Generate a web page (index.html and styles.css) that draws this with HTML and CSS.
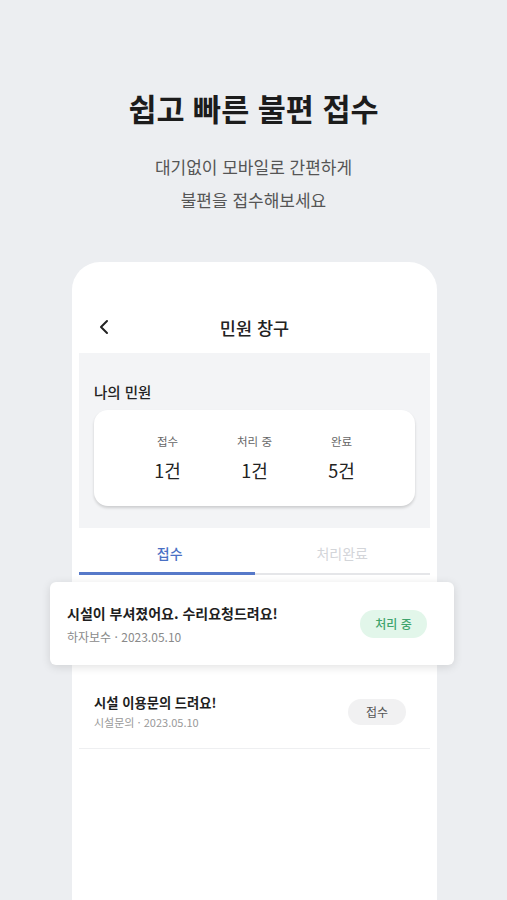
FILE: index.html
```html
<!DOCTYPE html>
<html lang="ko">
<head>
    <meta charset="UTF-8">
    <meta name="viewport" content="width=device-width, initial-scale=1.0">
    <title>쉽고 빠른 불편 접수</title>
    <link rel="stylesheet" href="styles.css">
</head>
<body>
    <div class="hero">
        <h1>쉽고 빠른 불편 접수</h1>
        <p class="desc">대기없이 모바일로 간편하게<br>불편을 접수해보세요</p>
    </div>

    <div class="phone">
        <!-- header -->
        <div class="top-bar">
            <span class="back">
                <svg width="10" height="16" viewBox="0 0 10 16"><polyline points="8,2 2,8 8,14" fill="none" stroke="#222" stroke-width="2" stroke-linecap="round" stroke-linejoin="round"/></svg>
            </span>
            <span class="top-title">민원 창구</span>
            <span></span>
        </div>

        <!-- my complaints summary -->
        <div class="summary">
            <h3>나의 민원</h3>
            <div class="stats">
                <div class="stat"><span class="stat-label">접수</span><span class="stat-value">1건</span></div>
                <div class="stat"><span class="stat-label">처리 중</span><span class="stat-value">1건</span></div>
                <div class="stat"><span class="stat-label">완료</span><span class="stat-value">5건</span></div>
            </div>
        </div>

        <div class="tabs">
            <div class="tab active">접수</div>
            <div class="tab">처리완료</div>
        </div>

        <div class="item lifted">
            <div class="item-text">
                <div class="item-title">시설이 부셔졌어요. 수리요청드려요!</div>
                <div class="item-sub">하자보수 · 2023.05.10</div>
            </div>
            <span class="badge green">처리 중</span>
        </div>

        <div class="item plain">
            <div class="item-text">
                <div class="item-title">시설 이용문의 드려요!</div>
                <div class="item-sub small">시설문의 · 2023.05.10</div>
            </div>
            <span class="badge gray">접수</span>
        </div>
    </div>
</body>
</html>
```

FILE: styles.css
```css
body {
    margin: 0;
    background: #eceef1;
    font-family: "Noto Sans CJK KR", "Noto Sans", sans-serif;
    color: #222;
    overflow: hidden;
}

.hero {
    padding-top: 86px;
    text-align: center;
}

.hero h1 {
    margin: 0;
    font-size: 30.5px;
    line-height: 44px;
    font-weight: 700;
    color: #1c1c1c;
}

.desc {
    margin: 20px 0 0;
    font-size: 17px;
    line-height: 33px;
    color: #555;
}

/* phone mockup */
.phone {
    width: 351px;
    margin: 46px auto 0;
    padding: 0 7px;
    height: 640px;
    background: #fff;
    border-radius: 28px 28px 0 0;
    transform: translateX(1px);
}

.top-bar {
    display: grid;
    grid-template-columns: 1fr auto 1fr;
    align-items: center;
    height: 26px;
    padding: 52px 0 13px;
}

.back {
    display: flex;
    padding-left: 20px;
}

.top-title {
    font-size: 17.5px;
    font-weight: 500;
}

.summary {
    background: #f3f4f6;
    padding: 28px 15px 22px;
}

.summary h3 {
    margin: 0 0 7px;
    font-size: 14.5px;
    line-height: 22px;
    font-weight: 500;
}

.stats {
    display: flex;
    justify-content: center;
    height: 96px;
    box-sizing: border-box;
    padding-top: 22px;
    background: #fff;
    border-radius: 14px;
    box-shadow: 0 2px 3px rgba(0, 0, 0, 0.16);
}

.stat {
    width: 87px;
    display: flex;
    flex-direction: column;
    align-items: center;
}

.stat-label {
    font-size: 11.5px;
    line-height: 18px;
    color: #666;
}

.stat-value {
    margin-top: 7px;
    font-size: 18px;
    line-height: 26px;
    color: #222;
}

.tabs {
    display: flex;
}

.tab {
    flex: 1;
    text-align: center;
    font-size: 14px;
    line-height: 20px;
    padding: 15px 0 10px;
    color: #d3d5d9;
    border-bottom: 2px solid #e5e6e9;
}

.tab.active {
    color: #4a70c4;
    font-weight: 500;
    border-bottom: 3px solid #5679c9;
    padding-bottom: 9px;
    text-indent: 6px;
}

.item {
    display: flex;
    align-items: center;
    justify-content: space-between;
}

.item-title {
    font-size: 14px;
    line-height: 20px;
    font-weight: 700;
    color: #1e1e1e;
}

.item-sub {
    margin-top: 6px;
    font-size: 12px;
    line-height: 16px;
    color: #8a8a8a;
}

.item.lifted {
    margin: 7px -24px 0 -29px;
    height: 83px;
    box-sizing: border-box;
    padding: 0 27px 0 17px;
    background: #fff;
    border-radius: 6px;
    box-shadow: 0 2px 10px rgba(0, 0, 0, 0.12);
    position: relative;
}

.item.plain {
    padding: 28px 24px 18px 15px;
    border-bottom: 1px solid #eeeff1;
}

.item.plain .item-title {
    font-size: 13.3px;
}

.item-sub.small {
    margin-top: 1px;
    font-size: 11px;
    color: #999;
}

.badge {
    display: inline-flex;
    align-items: center;
    justify-content: center;
    border-radius: 14px;
    font-size: 12px;
}

.badge.green {
    width: 67px;
    height: 28px;
    background: #e2f6ea;
    color: #3ea46d;
    font-weight: 500;
}

.badge.gray {
    width: 58px;
    height: 26px;
    background: #f1f1f2;
    color: #555;
}
```
